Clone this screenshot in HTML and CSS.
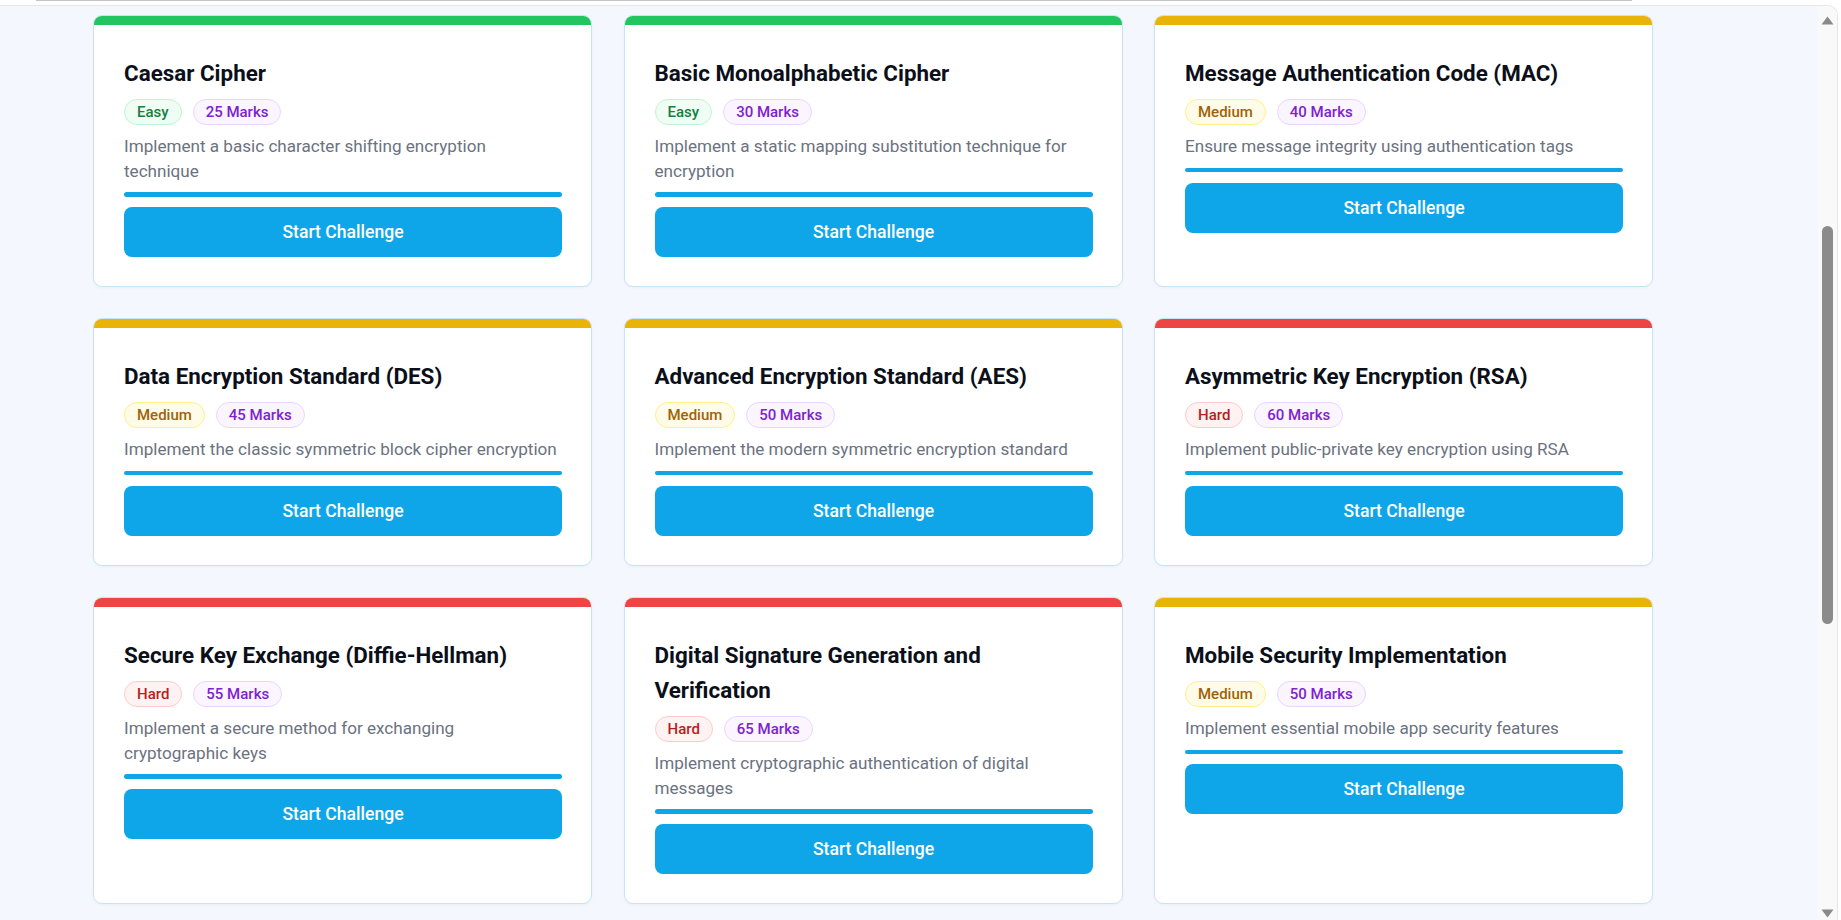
FILE: index.html
```html
<!DOCTYPE html>
<html lang="en">
<head>
<meta charset="utf-8">
<title>Cryptography Challenges</title>
<link rel="stylesheet" href="styles.css">
</head>
<body>
  <div class="chrome"><div class="chrome-line"></div></div>
  <div class="viewport">
    <main class="page">
      <section class="grid">
        <article class="card">
          <div class="card-bar bar-easy"></div>
          <div class="card-body">
            <h3 class="card-title">Caesar Cipher</h3>
            <div class="badges"><span class="badge badge-easy">Easy</span><span class="badge badge-marks">25 Marks</span></div>
            <p class="card-desc">Implement a basic character shifting encryption technique</p>
            <div class="progress"></div>
            <button class="btn">Start Challenge</button>
          </div>
        </article>
        <article class="card">
          <div class="card-bar bar-easy"></div>
          <div class="card-body">
            <h3 class="card-title">Basic Monoalphabetic Cipher</h3>
            <div class="badges"><span class="badge badge-easy">Easy</span><span class="badge badge-marks">30 Marks</span></div>
            <p class="card-desc">Implement a static mapping substitution technique for encryption</p>
            <div class="progress"></div>
            <button class="btn">Start Challenge</button>
          </div>
        </article>
        <article class="card">
          <div class="card-bar bar-medium"></div>
          <div class="card-body">
            <h3 class="card-title">Message Authentication Code (MAC)</h3>
            <div class="badges"><span class="badge badge-medium">Medium</span><span class="badge badge-marks">40 Marks</span></div>
            <p class="card-desc">Ensure message integrity using authentication tags</p>
            <div class="progress"></div>
            <button class="btn">Start Challenge</button>
          </div>
        </article>
        <article class="card">
          <div class="card-bar bar-medium"></div>
          <div class="card-body">
            <h3 class="card-title">Data Encryption Standard (DES)</h3>
            <div class="badges"><span class="badge badge-medium">Medium</span><span class="badge badge-marks">45 Marks</span></div>
            <p class="card-desc">Implement the classic symmetric block cipher encryption</p>
            <div class="progress"></div>
            <button class="btn">Start Challenge</button>
          </div>
        </article>
        <article class="card">
          <div class="card-bar bar-medium"></div>
          <div class="card-body">
            <h3 class="card-title">Advanced Encryption Standard (AES)</h3>
            <div class="badges"><span class="badge badge-medium">Medium</span><span class="badge badge-marks">50 Marks</span></div>
            <p class="card-desc">Implement the modern symmetric encryption standard</p>
            <div class="progress"></div>
            <button class="btn">Start Challenge</button>
          </div>
        </article>
        <article class="card">
          <div class="card-bar bar-hard"></div>
          <div class="card-body">
            <h3 class="card-title">Asymmetric Key Encryption (RSA)</h3>
            <div class="badges"><span class="badge badge-hard">Hard</span><span class="badge badge-marks">60 Marks</span></div>
            <p class="card-desc">Implement public-private key encryption using RSA</p>
            <div class="progress"></div>
            <button class="btn">Start Challenge</button>
          </div>
        </article>
        <article class="card">
          <div class="card-bar bar-hard"></div>
          <div class="card-body">
            <h3 class="card-title">Secure Key Exchange (Diffie-Hellman)</h3>
            <div class="badges"><span class="badge badge-hard">Hard</span><span class="badge badge-marks">55 Marks</span></div>
            <p class="card-desc">Implement a secure method for exchanging cryptographic keys</p>
            <div class="progress"></div>
            <button class="btn">Start Challenge</button>
          </div>
        </article>
        <article class="card">
          <div class="card-bar bar-hard"></div>
          <div class="card-body">
            <h3 class="card-title">Digital Signature Generation and Verification</h3>
            <div class="badges"><span class="badge badge-hard">Hard</span><span class="badge badge-marks">65 Marks</span></div>
            <p class="card-desc">Implement cryptographic authentication of digital messages</p>
            <div class="progress"></div>
            <button class="btn">Start Challenge</button>
          </div>
        </article>
        <article class="card">
          <div class="card-bar bar-medium"></div>
          <div class="card-body">
            <h3 class="card-title">Mobile Security Implementation</h3>
            <div class="badges"><span class="badge badge-medium">Medium</span><span class="badge badge-marks">50 Marks</span></div>
            <p class="card-desc">Implement essential mobile app security features</p>
            <div class="progress"></div>
            <button class="btn">Start Challenge</button>
          </div>
        </article>
      </section>
    </main>
    <div class="scrollbar">
      <svg class="sb-arrow sb-up" width="13" height="9" viewBox="0 0 13 9"><polygon points="6.5,0.5 12.5,8.5 0.5,8.5" fill="#8a8a8a"/></svg>
      <div class="sb-thumb"></div>
      <svg class="sb-arrow sb-down" width="13" height="9" viewBox="0 0 13 9"><polygon points="0.5,0.5 12.5,0.5 6.5,8.5" fill="#8a8a8a"/></svg>
    </div>
  </div>
</body>
</html>
```

FILE: styles.css
```css
* {
  box-sizing: border-box;
}

html, body {
  margin: 0;
  padding: 0;
  height: 920px;
  overflow: hidden;
}

body {
  background: #ffffff;
  font-family: Roboto, "Noto Sans", "Liberation Sans", sans-serif;
  display: flex;
  flex-direction: column;
}

.chrome {
  height: 5px;
  flex: none;
}

.chrome-line {
  margin-left: 36px;
  width: 1596px;
  height: 1px;
  background: #c4c4c4;
}

.viewport {
  flex: 1;
  display: flex;
  margin-right: 3px;
  border-top: 1px solid #e6e6e6;
  border-right: 1px solid #e6e6e6;
  border-top-right-radius: 10px;
  overflow: hidden;
  min-height: 0;
}

.page {
  flex: 1;
  background: #f4f7fd;
  padding: 9px 0 0 93px;
  overflow: hidden;
}

.grid {
  display: grid;
  grid-template-columns: repeat(3, 499px);
  column-gap: 31.5px;
  row-gap: 31px;
}

.card {
  background: #ffffff;
  border: 1px solid #c5e5f7;
  border-radius: 9px;
  overflow: hidden;
  display: flex;
  flex-direction: column;
  box-shadow: 0 1px 3px rgba(15, 23, 42, 0.04);
}

.card-bar {
  height: 9px;
  flex: none;
}

.bar-easy { background: #22c55e; }
.bar-medium { background: #eab308; }
.bar-hard { background: #ef4444; }

.card-body {
  padding: 31px 29px 29px 30px;
}

.card-title {
  margin: 0;
  padding-right: 16px;
  font-size: 22.4px;
  line-height: 35px;
  font-weight: 700;
  color: #0b0f19;
}

.badges {
  display: flex;
  gap: 11px;
  margin-top: 8px;
}

.badge {
  display: inline-flex;
  align-items: center;
  height: 26px;
  padding: 0 12px;
  border: 1px solid;
  border-radius: 999px;
  font-size: 15px;
  font-weight: 500;
}

.badge-easy {
  background: #f0fdf4;
  border-color: #bbf7d0;
  color: #15803d;
}

.badge-medium {
  background: #fefce8;
  border-color: #fef08a;
  color: #a16207;
}

.badge-hard {
  background: #fef2f2;
  border-color: #fecaca;
  color: #b91c1c;
}

.badge-marks {
  background: #faf5ff;
  border-color: #e9d5ff;
  color: #7e22ce;
}

.card-desc {
  margin: 9px 0 9px;
  font-size: 17.1px;
  line-height: 24.7px;
  color: #6b7280;
}

.progress {
  height: 4.4px;
  border-radius: 3px;
  background: #0ea5e9;
}

.btn {
  display: block;
  width: 100%;
  height: 50px;
  margin-top: 10.5px;
  border: none;
  border-radius: 8px;
  background: #0ea5e9;
  color: #ffffff;
  font-family: inherit;
  font-size: 17.6px;
  font-weight: 500;
}

.scrollbar {
  width: 19px;
  flex: none;
  background: #f9f9f9;
  display: flex;
  flex-direction: column;
  align-items: center;
}

.sb-arrow {
  display: block;
  flex: none;
}

.sb-up {
  margin-top: 10px;
}

.sb-thumb {
  width: 11px;
  height: 398px;
  margin-top: 201px;
  border-radius: 6px;
  background: #8b8b8b;
}

.sb-down {
  margin-top: auto;
  margin-bottom: 2px;
}
```
